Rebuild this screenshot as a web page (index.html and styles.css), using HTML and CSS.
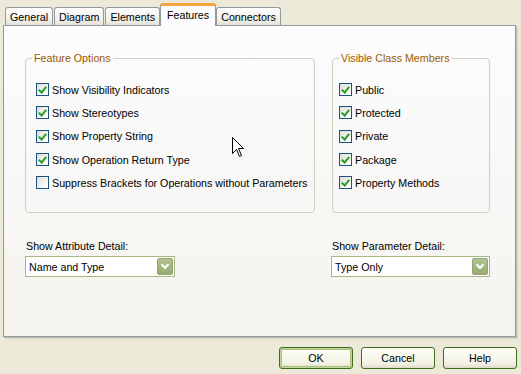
FILE: index.html
```html
<!DOCTYPE html>
<html lang="en">
<head>
  <meta charset="UTF-8" />
  <title>Features</title>
  <link rel="stylesheet" href="styles.css">
</head>
<body>
  <div class="dialog">
    <div class="tabs">
      <div class="tab">General</div>
      <div class="tab">Diagram</div>
      <div class="tab">Elements</div>
      <div class="tab active">Features</div>
      <div class="tab">Connectors</div>
    </div>

    <div class="panel">
      <div class="groups">
        <fieldset class="group group-features">
          <legend>Feature Options</legend>
          <label class="check"><span class="box on"></span>Show Visibility Indicators</label>
          <label class="check"><span class="box on"></span>Show Stereotypes</label>
          <label class="check"><span class="box on"></span>Show Property String</label>
          <label class="check"><span class="box on"></span>Show Operation Return Type</label>
          <label class="check"><span class="box"></span>Suppress Brackets for Operations without Parameters</label>
        </fieldset>

        <fieldset class="group group-members">
          <legend>Visible Class Members</legend>
          <label class="check"><span class="box on"></span>Public</label>
          <label class="check"><span class="box on"></span>Protected</label>
          <label class="check"><span class="box on"></span>Private</label>
          <label class="check"><span class="box on"></span>Package</label>
          <label class="check"><span class="box on"></span>Property Methods</label>
        </fieldset>
      </div>

      <div class="selects">
        <div class="field field-attr">
          <div class="field-label">Show Attribute Detail:</div>
          <div class="combo"><span>Name and Type</span><span class="drop"></span></div>
        </div>
        <div class="field field-param">
          <div class="field-label">Show Parameter Detail:</div>
          <div class="combo"><span>Type Only</span><span class="drop"></span></div>
        </div>
      </div>

      <!-- mouse pointer -->
      <svg class="cursor" width="12" height="20" viewBox="0 0 12 20">
        <path d="M0.5 0.5 L0.5 16.5 L4.5 12.5 L7.5 19.5 L9.5 18.5 L6.5 11.5 L11.5 11.5 Z" fill="#fff" stroke="#000" stroke-width="1"/>
      </svg>
    </div>

    <div class="buttons">
      <button class="btn default">OK</button>
      <button class="btn">Cancel</button>
      <button class="btn">Help</button>
    </div>
  </div>
</body>
</html>
```

FILE: styles.css
```css
body {
  margin: 0;
  background-color: #ece9d8;
  font-family: "Liberation Sans", Arial, sans-serif;
  font-size: 10.7px;
  color: #000;
  width: 521px;
  height: 374px;
  overflow: hidden;
}

.dialog {
  padding: 3px 5px 0 3px;
}

.tabs {
  display: flex;
  align-items: flex-end;
  height: 22px;
  padding-left: 2px;
  position: relative;
  z-index: 2;
}

.tab {
  height: 18px;
  line-height: 18px;
  padding: 0 4px;
  margin-right: 1px;
  border: 1px solid #919b9c;
  border-bottom: none;
  border-radius: 3px 3px 0 0;
  background: linear-gradient(#fefefe, #f0efe9 70%, #e3e1d6);
  box-sizing: border-box;
}

.tab.active {
  height: 23px;
  line-height: 19px;
  margin: 0 0 -1px -1px;
  padding: 0 6px;
  background: #fcfcfe;
  border-top: 3px solid #f4a43a;
}

.panel {
  position: relative;
  height: 312px;
  border: 1px solid #919b9c;
  box-shadow: 1px 1px 0 #c0bfb3, 2px 2px 0 #d8d6c7;
  background: linear-gradient(#fcfcfe, #f4f3ee);
  box-sizing: border-box;
}

.groups {
  display: flex;
  gap: 17px;
  padding: 26px 0 0 21px;
}

.group {
  margin: 0;
  padding: 14px 0 0 0;
  border: 1px solid #d0d0bf;
  border-radius: 4px;
  height: 161px;
  box-sizing: border-box;
}

.group legend {
  color: #9c5a00;
  padding: 0 2px;
  margin-left: 6px;
}

.group-features {
  width: 290px;
}

.group-features .check {
  padding-left: 10px;
}

.group-members {
  width: 158px;
}

.group-members .check {
  padding-left: 6px;
}

.check {
  display: flex;
  align-items: center;
  height: 23.3px;
  gap: 3px;
  white-space: nowrap;
}

.box {
  flex-shrink: 0;
  width: 13px;
  height: 13px;
  border: 1px solid #1c5180;
  box-sizing: border-box;
  background: linear-gradient(135deg, #dcdcd7, #fcfcfa 80%);
  position: relative;
}

.box.on::after {
  content: "";
  position: absolute;
  left: 3px;
  top: 1px;
  width: 3px;
  height: 6px;
  border: solid #21a121;
  border-width: 0 2px 2px 0;
  transform: rotate(40deg);
}

.selects {
  display: flex;
  justify-content: space-between;
  padding: 26px 25px 0 21px;
}

.field-label {
  height: 17px;
  line-height: 14px;
  padding-left: 1px;
}

.combo {
  display: flex;
  align-items: center;
  justify-content: space-between;
  height: 21px;
  border: 1px solid #a5b97f;
  background: #fff;
  padding: 0 1px 0 3px;
  box-sizing: border-box;
}

.field-attr .combo {
  width: 150px;
}

.field-param .combo {
  width: 159px;
}

.drop {
  width: 16px;
  height: 17px;
  border: 1px solid #95a07d;
  border-radius: 2px;
  box-sizing: border-box;
  background: linear-gradient(#b2c38f, #97ab6e);
  position: relative;
}

.drop::after {
  content: "";
  position: absolute;
  left: 4px;
  top: 3px;
  width: 4px;
  height: 4px;
  border: solid #fff;
  border-width: 0 2px 2px 0;
  transform: rotate(45deg);
}

.cursor {
  position: absolute;
  left: 228px;
  top: 111px;
}

.buttons {
  display: flex;
  justify-content: flex-end;
  gap: 8px;
  padding: 10px 0 0 0;
  margin-right: -1px;
}

.btn {
  width: 74px;
  height: 22px;
  font-family: inherit;
  font-size: 10.7px;
  border: 1px solid #3f6b1a;
  border-radius: 3px;
  background: linear-gradient(#fffff8, #f3f1e4 80%, #dcd9c5);
  padding: 0;
}

.btn.default {
  box-shadow: inset 0 0 0 1px #c2d6a0, inset 0 0 0 2px #a8c07a;
}
```
